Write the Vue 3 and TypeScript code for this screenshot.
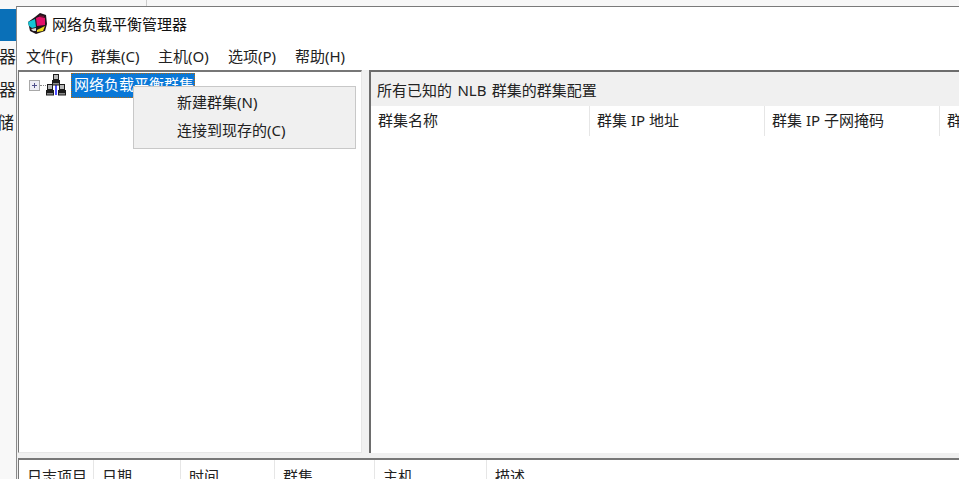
<script setup lang="ts">
const menus: { label: string; width: number }[] = [
  { label: '文件(F)', width: 65 },
  { label: '群集(C)', width: 67 },
  { label: '主机(O)', width: 70 },
  { label: '选项(P)', width: 67 },
  { label: '帮助(H)', width: 60 }
]
const clusterCols: { label: string; width: number }[] = [
  { label: '群集名称', width: 219 },
  { label: '群集 IP 地址', width: 175 },
  { label: '群集 IP 子网掩码', width: 175 },
  { label: '群集模式', width: 120 }
]
const logCols: { label: string; width: number }[] = [
  { label: '日志项目', width: 75 },
  { label: '日期', width: 87 },
  { label: '时间', width: 94 },
  { label: '群集', width: 100 },
  { label: '主机', width: 112 }
]
const computers: { x: number; y: number }[] = [
  { x: 6, y: 0 },
  { x: 0, y: 10 },
  { x: 12, y: 10 }
]
</script>

<template>
  <div class="page">
    <div class="backstrip"><span class="backline"></span></div>
    <div class="main">
      <aside class="behind">
        <div class="behind-blue"></div>
        <div class="behind-item">器</div>
        <div class="behind-item">器</div>
        <div class="behind-item shifted">储</div>
      </aside>
      <section class="win">
        <header class="title">
          <svg class="appicon" width="22" height="22" viewBox="0 0 22 22">
            <path d="M13 0 L19 2 L20 11 L18 18 L9 21 L3 18 L1 9 L8 4 Z" fill="#20141c" />
            <path d="M1 9 L8 6 L9 14 L5 15 L2 13 Z" fill="#14c4d4" />
            <path d="M9 5 L14 3 L18 5 L18 12 L10 13 Z" fill="#e2116a" />
            <path d="M12 2 L17 3 L17 5 L13 4 Z" fill="#6b1030" />
            <path d="M10 17 L18 13 L16 18 L10 19 Z" fill="#eedc1e" />
            <path d="M4 16 L9 15 L9 18 L6 18 Z" fill="#d3d8d8" />
          </svg>
          <span>网络负载平衡管理器</span>
        </header>
        <nav class="menubar">
          <span v-for="m in menus" :key="m.label" class="menu" :style="{ width: m.width + 'px' }">{{ m.label }}</span>
        </nav>
        <div class="body">
          <div class="tree">
            <div class="node">
              <span class="expander">
                <svg width="11" height="11" viewBox="0 0 11 11">
                  <rect x="0.5" y="0.5" width="10" height="10" fill="#eeeef4" stroke="#a8a8a8" />
                  <path d="M3 5.5 H8 M5.5 3 V8" stroke="#50508a" fill="none" />
                </svg>
              </span>
              <span class="dots"></span>
              <svg class="nlbicon" width="20" height="22" viewBox="0 0 20 22">
                <path d="M10 7 V21" stroke="#1414ff" stroke-width="1.5" fill="none" />
                <g v-for="(c, i) in computers" :key="i" :transform="`translate(${c.x} ${c.y})`">
                  <rect x="1.5" y="0.5" width="5" height="5" fill="#b8b8b8" stroke="#1c1c1c" />
                  <rect x="0" y="6" width="8" height="2" fill="#1c1c1c" />
                  <rect x="0.5" y="8.5" width="7" height="2.5" fill="#8a8a8a" stroke="#1c1c1c" />
                </g>
              </svg>
              <span class="nodelabel">网络负载平衡群集</span>
            </div>
            <div class="ctx">
              <div class="ctxitem">新建群集(N)</div>
              <div class="ctxitem">连接到现存的(C)</div>
            </div>
          </div>
          <div class="splitter"></div>
          <div class="detail">
            <div class="caption">所有已知的 NLB 群集的群集配置</div>
            <div class="cols">
              <span v-for="c in clusterCols" :key="c.label" class="col" :style="{ width: c.width + 'px' }">{{ c.label }}</span>
            </div>
          </div>
        </div>
        <div class="log">
          <span v-for="c in logCols" :key="c.label" class="logcol" :style="{ width: c.width + 'px' }">{{ c.label }}</span>
          <span class="logcol last">描述</span>
        </div>
      </section>
    </div>
  </div>
</template>

<style>
html, body { margin: 0; padding: 0; background: #fff; overflow: hidden; }
</style>

<style scoped>
.page {
  width: 959px;
  height: 479px;
  overflow: hidden;
  display: flex;
  flex-direction: column;
  font-family: "Noto Sans", "Noto Sans CJK SC", sans-serif;
  font-size: 15px;
  color: #222;
  background: #fff;
}
.backstrip {
  height: 6px;
  background: #f7f7f7;
  display: flex;
  flex: none;
}
.backline {
  width: 1px;
  height: 6px;
  background: #ccc;
  margin-left: 146px;
}
.main { display: flex; flex: 1; min-height: 0; }
.behind {
  width: 16px;
  flex: none;
  background: #f8f8f8;
  overflow: hidden;
  padding-top: 3px;
  box-sizing: border-box;
}
.behind-blue { height: 32px; background: #0a70b8; }
.behind-item {
  height: 33px;
  line-height: 32px;
  font-size: 17px;
  margin-left: -1px;
  white-space: nowrap;
}
.behind-item.shifted { margin-left: -3px; }
.win {
  flex: 1;
  min-width: 0;
  display: flex;
  flex-direction: column;
  background: #f0f0f0;
  border-left: 1px solid #8a8a8a;
  border-top: 1px solid #7a7a7a;
}
.title {
  height: 33px;
  flex: none;
  background: #fff;
  display: flex;
  align-items: center;
  padding-left: 10px;
  box-sizing: border-box;
  gap: 3px;
  color: #111;
}
.appicon { flex: none; }
.menubar {
  height: 30px;
  flex: none;
  background: #fff;
  display: flex;
  align-items: center;
  padding-left: 9px;
  box-sizing: border-box;
}
.menu { flex: none; white-space: nowrap; }
.body {
  flex: none;
  height: 383px;
  display: flex;
  background: #f0f0f0;
  box-sizing: border-box;
}
.tree {
  position: relative;
  width: 344px;
  flex: none;
  margin-left: 1px;
  background: #fff;
  border-left: 1px solid #777;
  border-top: 2px solid #777;
  border-right: 1px solid #e6e6e6;
  border-bottom: 1px solid #e6e6e6;
  padding: 1px 0 0 10px;
  box-sizing: border-box;
}
.node { display: flex; align-items: flex-start; height: 24px; }
.expander { display: flex; width: 11px; flex: none; margin-top: 7px; }
.dots {
  width: 6px;
  flex: none;
  margin-top: 12px;
  border-top: 1px dotted #888;
}
.nlbicon { flex: none; margin: 1px 5px 0 0; }
.nodelabel {
  background: #0a78d7;
  color: #fff;
  outline: 1px dotted #b36a10;
  outline-offset: -1px;
  padding: 0 1px 0 3px;
  height: 25px;
  line-height: 23px;
  white-space: nowrap;
  box-sizing: border-box;
}
.ctx {
  position: absolute;
  left: 114px;
  top: 14px;
  width: 223px;
  height: 63px;
  box-sizing: border-box;
  background: #f0f0f0;
  border: 1px solid #c8c8c8;
  padding-top: 2px;
}
.ctxitem {
  height: 28px;
  line-height: 26px;
  padding-left: 43px;
  white-space: nowrap;
}
.splitter { width: 7px; flex: none; }
.detail {
  flex: 1;
  min-width: 0;
  background: #fff;
  border-left: 2px solid #6d6d6d;
  border-top: 2px solid #6d6d6d;
  overflow: hidden;
}
.caption {
  height: 34px;
  line-height: 36px;
  background: #f0f0f0;
  padding-left: 6px;
  white-space: nowrap;
  word-spacing: 1.5px;
}
.cols { display: flex; height: 30px; white-space: nowrap; }
.col {
  flex: none;
  padding-left: 7px;
  box-sizing: border-box;
  border-right: 1px solid #e6e6e6;
  line-height: 28px;
}
.log {
  flex: 1;
  background: #fff;
  margin: 5px 0 0 1px;
  border-left: 1px solid #777;
  border-top: 2px solid #777;
  display: flex;
  white-space: nowrap;
  overflow: hidden;
}
.logcol {
  flex: none;
  box-sizing: border-box;
  padding-left: 8px;
  border-right: 1px solid #e6e6e6;
  line-height: 32px;
}
.logcol.last { border-right: none; }
</style>
